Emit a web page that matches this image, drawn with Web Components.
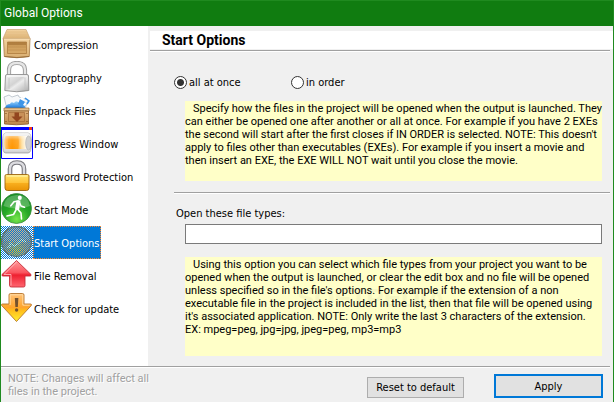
<!DOCTYPE html>
<html lang="en">
<head>
<meta charset="utf-8">
<title>Global Options</title>
<style>
html, body { margin: 0; height: 100%; }
body {
  --ui: "DejaVu Sans Condensed", "DejaVu Sans", sans-serif;
  --face: #f0f0f0;
  --green: #107c10;
  font: 11px/13px var(--ui);
  color: #000;
}
</style>
</head>
<body>
<options-window caption="Global Options">
  <nav-list slot="nav">
    <nav-item icon="crate">Compression</nav-item>
    <nav-item icon="lock">Cryptography</nav-item>
    <nav-item icon="unpack">Unpack Files</nav-item>
    <nav-item icon="progress">Progress Window</nav-item>
    <nav-item icon="goldlock">Password Protection</nav-item>
    <nav-item icon="runner">Start Mode</nav-item>
    <nav-item icon="dither" selected>Start Options</nav-item>
    <nav-item icon="up">File Removal</nav-item>
    <nav-item icon="down">Check for update</nav-item>
  </nav-list>
  <start-options-page></start-options-page>
  <dialog-footer slot="footer"></dialog-footer>
</options-window>

<script>
const shadow = (host, html) => {
  const root = host.attachShadow({ mode: 'open' });
  root.innerHTML = html;
  return root;
};

const ICONS = {
  crate: `<defs><linearGradient id="a" x2="0" y2="1"><stop stop-color="#f3d3a0"/><stop offset="1" stop-color="#d9ae70"/></linearGradient>
    <linearGradient id="b" x2="0" y2="1"><stop stop-color="#b98544"/><stop offset=".35" stop-color="#cf9f5c"/><stop offset="1" stop-color="#d8aa68"/></linearGradient></defs>
    <path d="M6 1.500h19l4 9v1H2v-1z" fill="url(#a)" stroke="#c9a471" stroke-width=".7"/>
    <path d="M5 4h21M4 7h23" stroke="#e2bb82" stroke-width=".7"/>
    <path d="M2.500 10.500h26.500l-.7 18q-12.500 2.500-25 0z" fill="url(#a)" stroke="#a97c45" stroke-width=".8"/>
    <path d="M2.500 11h26.500" stroke="#fbe3bb"/>
    <path d="M6.500 14h19v11.500h-19z" fill="url(#b)" stroke="#a87437" stroke-width=".7"/>
    <path d="M7 14.500h18v2.500H7z" fill="#a9773a" opacity=".7"/>
    <path d="M7 19h18M7 22h18" stroke="#bd8a49" stroke-width=".6"/>
    <path d="M3.500 28.500q12.500 2 24.500 0" stroke="#8d6231" fill="none" stroke-width=".8"/>`,
  lock: `<defs><linearGradient id="a" x2="1" y2="1"><stop stop-color="#f4f4f4"/><stop offset=".45" stop-color="#d3d3d3"/><stop offset=".55" stop-color="#ececec"/><stop offset="1" stop-color="#aaa"/></linearGradient></defs>
    <path d="M8 15V9q0-7 8-7t8 7v6" fill="none" stroke="#999" stroke-width="4.200"/>
    <path d="M8 15V9q0-7 8-7t8 7v6" fill="none" stroke="#e6e6e6" stroke-width="2.400"/>
    <path d="M6 13.500h20q1.500 0 1.500 1.500l.3 14.500q-12 2.500-24 0L4.500 15q0-1.500 1.500-1.500z" fill="url(#a)" stroke="#909090" stroke-width=".9"/>
    <path d="M6 15h20" stroke="#fff" stroke-width="1.200"/>
    <path d="M8 17v11M24 17v11" stroke="#c2c2c2" stroke-width=".8"/>`,
  unpack: `<defs><linearGradient id="a" x2="0" y2="1"><stop stop-color="#9bd4fb"/><stop offset="1" stop-color="#1677dc"/></linearGradient>
    <linearGradient id="b" x2="0" y2="1"><stop stop-color="#e0b37b"/><stop offset="1" stop-color="#bd854b"/></linearGradient></defs>
    <path d="M3 3l5-2 3 2 6-2 1 2 9 3-3 9H6z" fill="#f6f8fa" stroke="#aab4be" stroke-width=".7"/>
    <path d="M4 14q1-4 5-4 1-3 4-1 2-3 4-1l5 2 2 4z" fill="url(#a)"/>
    <path d="M19 5l7 4-3 5-6-4z" fill="#3f95e7"/><path d="M20 3l3 1-1 2-3-1zM24 8l2 1-2 3-2-1z" fill="#fff"/>
    <path d="M24 4l4 3-2 3" fill="none" stroke="#3590e7" stroke-width="1.500"/>
    <path d="M3 14h25v3H3z" fill="#e8c18e" stroke="#99703f" stroke-width=".7"/>
    <path d="M3.500 17h24v13q-12 1.500-24 0z" fill="url(#b)" stroke="#8b5a2b" stroke-width=".8"/>
    <path d="M7.500 18.500h16v9h-16z" fill="#c99159" stroke="#9a6333" stroke-width=".6"/>
    <path d="M13.500 18.500h4.500v4h3.500L16 28l-5.500-5.500h3z" fill="#92451f"/>
    <path d="M5 19v1M5 27v1M26 19v1M26 27v1" stroke="#704019"/>`,
  progress: `<defs><linearGradient id="a" x2="1"><stop stop-color="#ffd79a"/><stop offset=".12" stop-color="#ffb347"/><stop offset=".35" stop-color="#ff9500"/><stop offset=".6" stop-color="#ffab30"/><stop offset=".78" stop-color="#ffe1a4"/><stop offset="1" stop-color="#fff"/></linearGradient>
    <linearGradient id="b" x2="0" y2="1"><stop stop-color="#fff" stop-opacity=".8"/><stop offset=".35" stop-color="#fff" stop-opacity=".1"/><stop offset=".8" stop-color="#fff" stop-opacity="0"/><stop offset="1" stop-color="#555" stop-opacity=".2"/></linearGradient></defs>
    <path d="M.5.5h31v31H.5z" fill="#fff" stroke="#00f"/>
    <path d="M0 0h32v3H0z" fill="#00f"/><path d="M28 0h3v3h-3z" fill="#f03a17"/>
    <path d="M4.500 6h22.500q3.500 0 3.500 10t-3.500 10H4.500q-3 0-3-10t3-10z" fill="#dedede" stroke="#a8a8a8" stroke-width=".8"/>
    <path d="M4.500 9H26q-2 7 0 13H4.500q-3-6 0-13z" fill="url(#a)"/>
    <path d="M8 9h9q2 6 0 13H8q-2-6 0-13z" fill="#ff9500" opacity=".5"/>
    <path d="M4.500 6h22.500q3.500 0 3.500 10t-3.500 10H4.500q-3 0-3-10t3-10z" fill="url(#b)"/>
    <ellipse cx="27.500" cy="16" rx="2.800" ry="7" fill="#cfcfcf" stroke="#b4b4b4" stroke-width=".7"/>`,
  goldlock: `<defs><linearGradient id="a" x2="0" y2="1"><stop stop-color="#ffe46c"/><stop offset=".5" stop-color="#ffc53b"/><stop offset=".55" stop-color="#f8ae1d"/><stop offset="1" stop-color="#e99306"/></linearGradient></defs>
    <path d="M9 16V9q0-6.500 7-6.500T23 9v7" fill="none" stroke="#77777d" stroke-width="4.600"/>
    <path d="M9 16V9q0-6.500 7-6.500T23 9v7" fill="none" stroke="#dcdce0" stroke-width="2.400"/>
    <path d="M5.500 14.500h21q1.500 0 1.500 1.500v12q0 2.500-2.500 2.500h-19Q4 30.500 4 28V16q0-1.500 1.500-1.500z" fill="url(#a)" stroke="#9c6410" stroke-width=".9"/>
    <path d="M5.500 16h21" stroke="#fff3a8" stroke-width="1.200"/>`,
  runner: `<defs><radialGradient id="a" cy=".85" r=".85"><stop stop-color="#75e54b"/><stop offset=".5" stop-color="#27a827"/><stop offset="1" stop-color="#138a22"/></radialGradient></defs>
    <circle cx="15.500" cy="15.500" r="15" fill="url(#a)" stroke="#3a8c3c" stroke-width=".8"/>
    <path d="M2.500 13Q4 2.500 15.500 2T29 13q-13 5-26.500 0z" fill="#fff" opacity=".25"/>
    <ellipse cx="18.800" cy="4.800" rx="2" ry="2.300" fill="#fff"/>
    <path d="M17.500 8l-4.500.8-3.200 4M18.500 9.500l1.500 3.500 3.500 1.200M17 16.500l3 3.500.5 6M15 17l-2.500 4.500-6.500 1.500" fill="none" stroke="#fff" stroke-width="1.600" stroke-linecap="round" stroke-linejoin="round"/>
    <path d="M15.500 7.500h4L18 17.500l-4-1z" fill="#fff"/>`,
  dither: `<defs><pattern id="p" width="2" height="2" patternUnits="userSpaceOnUse"><path d="M0 0h1v1H0zM1 1h1v1H1z" fill="#0078d7"/></pattern>
    <radialGradient id="a" cy=".8"><stop stop-color="#f4ce16"/><stop offset=".55" stop-color="#dfa845"/><stop offset="1" stop-color="#c39a68"/></radialGradient></defs>
    <path d="M0 0h32v33H0z" fill="#fff"/>
    <circle cx="15.500" cy="15.500" r="15" fill="url(#a)" stroke="#b26b13" stroke-width="1.200"/>
    <path d="M2.500 15Q4 2.500 15.500 2T29 14q-8-1-12 4-7-4-14.500-3z" fill="#dcc19a" opacity=".65"/>
    <path d="M6 21h3v-4l4 3 4-2 4-4 4 2" fill="none" stroke="#fff4b0" stroke-width="1.500"/>
    <path d="M0 0h32v33H0z" fill="url(#p)" shape-rendering="crispEdges"/>`,
  up: `<defs><linearGradient id="a" x2="0" y2="1"><stop stop-color="#ff9b9b"/><stop offset=".45" stop-color="#fa5660"/><stop offset=".55" stop-color="#ee2030"/><stop offset="1" stop-color="#ff6670"/></linearGradient></defs>
    <path d="M15.500 1.500l14.500 14q.5 1.500-1 1.500h-5v9.500q0 1.500-1.500 1.500h-12Q8.500 28 8.500 26.500V17H2q-1.500 0-1-1.500z" fill="url(#a)" stroke="#c5303b" stroke-width=".9"/>
    <path d="M15.500 3L3 15.500h7v11" fill="none" stroke="#ffc5c5" stroke-width=".8"/>`,
  down: `<defs><linearGradient id="a" x2="0" y2="1"><stop stop-color="#ffc278"/><stop offset=".5" stop-color="#ffa52b"/><stop offset=".6" stop-color="#ffbc1c"/><stop offset="1" stop-color="#fff02f"/></linearGradient></defs>
    <path d="M9.500 1.500h12q1.500 0 1.500 1.500v9h6.500q1.500 0 .8 1.500L15.500 29.500.7 13.500Q0 12 1.500 12H8V3q0-1.500 1.500-1.500z" fill="url(#a)" stroke="#b5742c" stroke-width=".9"/>
    <path d="M9.200 13V2.800h12.600V13.200h7" fill="none" stroke="#ffe2b0" stroke-width=".8"/>
    <path d="M13.800 6h3.600l-.6 9h-2.400z" fill="#74512c"/><circle cx="15.600" cy="18" r="1.700" fill="#74512c"/>`
};

customElements.define('options-window', class extends HTMLElement {
  connectedCallback() {
    shadow(this, `<style>
      :host { display: flex; flex-direction: column; min-height: 100vh; box-sizing: border-box; border: 1px solid #1f8a1f; background: var(--face); }
      header { background: var(--green); color: #fff; font: 12px/24px Roboto, "Noto Sans", sans-serif; height: 25px; padding-left: 3px; box-sizing: border-box; }
      .body { flex: 1; display: grid; grid-template-columns: 147px 1fr; }
    </style>
    <header>${this.getAttribute('caption')}</header>
    <div class="body"><slot name="nav"></slot><slot></slot></div>
    <slot name="footer"></slot>`);
  }
});

customElements.define('nav-list', class extends HTMLElement {
  connectedCallback() {
    shadow(this, `<style>
      :host { display: block; background: #fff; padding-top: 2px; }
      nav { display: flex; flex-direction: column; }
    </style><nav aria-label="Sections"><slot></slot></nav>`);
  }
});

customElements.define('nav-item', class extends HTMLElement {
  connectedCallback() {
    shadow(this, `<style>
      :host { display: block; height: 33px; }
      button { all: unset; display: flex; height: 33px; white-space: nowrap; }
      svg { width: 32px; height: 33px; flex: none; }
      span { box-sizing: border-box; height: 33px; padding-top: 1px; line-height: 32px; border: 1px dotted transparent; }
      :host([selected]) span { background: #0078d7; color: #fff; border-color: #ff8728; }
    </style>
    <button type="button"><svg viewBox="0 0 32 33" aria-hidden="true">${ICONS[this.getAttribute('icon')]}</svg><span><slot></slot></span></button>`);
  }
});

customElements.define('rule-line', class extends HTMLElement {
  connectedCallback() {
    shadow(this, `<style>:host { display: block; height: 1px; background: #a0a0a0; border-bottom: 1px solid #fff; }</style>`);
  }
});

customElements.define('hint-box', class extends HTMLElement {
  connectedCallback() {
    shadow(this, `<style>
      :host { display: block; position: relative; z-index: 0; box-sizing: border-box; background: #ffffc8; text-indent: 8px; white-space: nowrap; font-family: Roboto, sans-serif; }
      ::slotted([slot=mark]) { position: absolute; z-index: -1; }
    </style><slot name="mark"></slot><slot></slot>`);
  }
});

customElements.define('start-options-page', class extends HTMLElement {
  connectedCallback() {
    shadow(this, `<style>
      :host { display: block; padding: 5px 2px 0; }
      h1 { margin: 0 0 1px; background: #fff; font: bold 14px/18px Roboto, sans-serif; padding-left: 12px; }
      rule-line { margin-right: 3px; }
      .choices { display: flex; margin: 24px 0 12px 24px; }
      .choices label { display: flex; align-items: center; gap: 2px; width: 117px; }
      input[type=radio] { appearance: none; box-sizing: border-box; width: 13px; height: 13px; margin: 0; border: 1px solid #333; border-radius: 50%; background: #fff; }
      input[type=radio]:checked { background: radial-gradient(circle, #333 0 3px, #fff 4px); }
      hint-box { margin: 0 11px 0 35px; }
      .one { height: 80px; padding-top: 1px; }
      .two { height: 99px; padding-top: 1px; margin-bottom: 10px; }
      .mid { margin: 11px 3px 13px 24px; }
      .types { display: block; margin-left: 26px; }
      input[type=text] { display: block; box-sizing: border-box; width: calc(100% - 46px); height: 20px; margin: 4px 11px 13px 35px; padding: 2px; border: 1px solid #7a7a7a; background: #fff; font: inherit; }
      .mark { left: 112px; top: 26px; font: bold 26px/30px "Liberation Sans", sans-serif; text-indent: 0; color: #f6f6c2; }
    </style>
    <h1>Start Options</h1>
    <rule-line></rule-line>
    <div class="choices">
      <label><input type="radio" name="when" checked>all at once</label>
      <label><input type="radio" name="when">in order</label>
    </div>
    <hint-box class="one">Specify how the files in the project will be opened when the output is launched. They<br>can either be opened one after another or all at once. For example if you have 2 EXEs<br>the second will start after the first closes if IN ORDER is selected. NOTE: This doesn't<br>apply to files other than executables (EXEs). For example if you insert a movie and<br>then insert an EXE, the EXE WILL NOT wait until you close the movie.</hint-box>
    <rule-line class="mid"></rule-line>
    <label class="types" for="types">Open these file types:</label>
    <input type="text" id="types">
    <hint-box class="two"><span slot="mark" class="mark">SOFTPEDIA</span>Using this option you can select which file types from your project you want to be<br>opened when the output is launched, or clear the edit box and no file will be opened<br>unless specified so in the file's options. For example if the extension of a non<br>executable file in the project is included in the list, then that file will be opened using<br>it's associated application. NOTE: Only write the last 3 characters of the extension.<br>EX: mpeg=peg, jpg=jpg, jpeg=peg, mp3=mp3</hint-box>`);
  }
});

customElements.define('dialog-footer', class extends HTMLElement {
  connectedCallback() {
    shadow(this, `<style>
      :host { display: block; }
      rule-line { margin-right: 3px; }
      .row { display: flex; align-items: flex-end; padding: 4px 10px 4px 7px; gap: 30px; }
      p { flex: 1; margin: 0; align-self: flex-start; color: #a0a0a0; text-shadow: 1px 1px #fff; font-family: Roboto, sans-serif; }
      button { box-sizing: border-box; font: inherit; color: #000; background: #e1e1e1; border: 1px solid #adadad; padding: 0; margin: 0; width: 97px; height: 21px; white-space: nowrap; }
      button.primary { width: 109px; height: 24px; border: 2px solid #0078d7; }
    </style>
    <rule-line></rule-line>
    <div class="row">
      <p>NOTE: Changes will affect all<br>files in the project.</p>
      <button type="button">Reset to default</button>
      <button type="submit" class="primary">Apply</button>
    </div>`);
  }
});
</script>
</body>
</html>
